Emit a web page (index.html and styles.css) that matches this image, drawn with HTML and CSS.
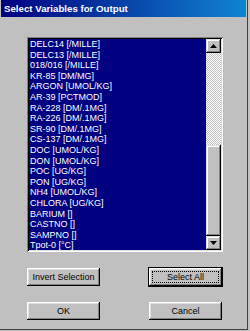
FILE: index.html
```html
<!DOCTYPE html>
<html lang="en">
<head>
<meta charset="UTF-8">
<meta name="viewport" content="width=device-width, initial-scale=1.0">
<title>Select Variables for Output</title>
<link rel="stylesheet" href="styles.css">
</head>
<body>

<div class="dialog">
  <div class="titlebar">Select Variables for Output</div>

  <div class="content">
    <div class="listbox">
      <ul class="items">
        <li>DELC14 [/MILLE]</li>
        <li>DELC13 [/MILLE]</li>
        <li>018/016 [/MILLE]</li>
        <li>KR-85 [DM/MG]</li>
        <li>ARGON [UMOL/KG]</li>
        <li>AR-39 [PCTMOD]</li>
        <li>RA-228 [DM/.1MG]</li>
        <li>RA-226 [DM/.1MG]</li>
        <li>SR-90 [DM/.1MG]</li>
        <li>CS-137 [DM/.1MG]</li>
        <li>DOC [UMOL/KG]</li>
        <li>DON [UMOL/KG]</li>
        <li>POC [UG/KG]</li>
        <li>PON [UG/KG]</li>
        <li>NH4 [UMOL/KG]</li>
        <li>CHLORA [UG/KG]</li>
        <li>BARIUM []</li>
        <li>CASTNO []</li>
        <li>SAMPNO []</li>
        <li>Tpot-0 [°C]</li>
      </ul>
      <div class="scrollbar">
        <div class="sb-btn">
          <svg width="7" height="4" viewBox="0 0 7 4"><polygon points="3.5,0 7,4 0,4" fill="#000"/></svg>
        </div>
        <div class="sb-track"></div>
        <div class="sb-thumb"></div>
        <div class="sb-btn">
          <svg width="7" height="4" viewBox="0 0 7 4"><polygon points="0,0 7,0 3.5,4" fill="#000"/></svg>
        </div>
      </div>
    </div>

    <div class="button-row first">
      <button type="button">Invert Selection</button>
      <button type="button" class="default"><span class="focus">Select All</span></button>
    </div>

    <div class="button-row">
      <button type="button">OK</button>
      <button type="button">Cancel</button>
    </div>
  </div>
</div>

</body>
</html>
```

FILE: styles.css
```css
body {
  margin: 0;
  padding: 0;
  background-color: #c0c0c0;
  font-family: "Liberation Sans", Arial, sans-serif;
}

.dialog {
  width: 248px;
  height: 330px;
  box-sizing: border-box;
  background-color: #c0c0c0;
  border-right: 1px solid #404040;
  border-bottom: 1px solid #404040;
}

.titlebar {
  margin-left: 1px;
  width: 245px;
  height: 17px;
  box-sizing: border-box;
  padding: 1px 0 0 3px;
  line-height: 16px;
  font-size: 9.7px;
  font-weight: bold;
  color: #fff;
  background: linear-gradient(to right, #000080, #1084d0);
  white-space: nowrap;
}

.content {
  padding: 20px 0 0 27px;
}

.listbox {
  display: flex;
  width: 196px;
  height: 215px;
  box-sizing: border-box;
  padding: 2px;
  background-color: #000080;
  box-shadow: inset 1px 1px #808080, inset -1px -1px #fff, inset 2px 2px #000, inset -2px -2px #dfdfdf;
}

.items {
  flex: 1;
  list-style: none;
  margin: 0;
  padding: 0 0 0 1px;
  overflow: hidden;
  font-size: 9px;
  line-height: 10.6px;
  color: #fff;
}

.items li {
  white-space: nowrap;
}

.scrollbar {
  display: flex;
  flex-direction: column;
  width: 15px;
}

.sb-btn,
.sb-thumb {
  background-color: #c0c0c0;
  box-shadow: inset -1px -1px #000, inset 1px 1px #dfdfdf, inset -2px -2px #808080, inset 2px 2px #fff;
}

.sb-btn {
  height: 14px;
  display: flex;
  align-items: center;
  justify-content: center;
}

.sb-btn svg {
  display: block;
}

.sb-track {
  height: 92px;
  background-image: repeating-conic-gradient(#c0c0c0 0 25%, #fff 0 50%);
  background-size: 2px 2px;
}

.sb-thumb {
  flex: 1;
}

.button-row {
  display: flex;
  gap: 49px;
  margin-top: 16px;
}

.button-row.first {
  margin-top: 16px;
}

button {
  width: 73px;
  height: 18px;
  padding: 0;
  border: none;
  background-color: #c0c0c0;
  font-family: "Liberation Sans", Arial, sans-serif;
  font-size: 9px;
  color: #000;
  box-shadow: inset -1px -1px #000, inset 1px 1px #fff, inset -2px -2px #808080, inset 2px 2px #dfdfdf;
}

button.default {
  outline: 1px solid #000;
}

.focus {
  display: block;
  margin: 0 3px;
  line-height: 10px;
  border: 1px dotted #000;
}
```
